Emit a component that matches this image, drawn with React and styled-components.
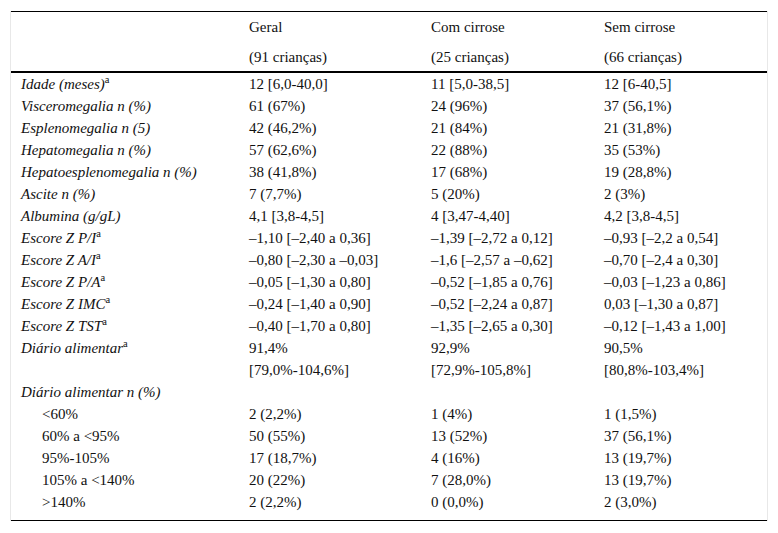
import React from 'react'
import styled, { createGlobalStyle } from 'styled-components'

const GlobalStyle = createGlobalStyle`
  html, body {
    margin: 0;
    padding: 0;
    background: #fff;
  }
`

const Frame = styled.div`
  box-sizing: border-box;
  margin: 11px 0 0 10px;
  width: 758px;
  border-left: 1px solid #e8e8e8;
  border-right: 1px solid #e8e8e8;
`

const Table = styled.table`
  width: 100%;
  border-collapse: collapse;
  table-layout: fixed;
  font-family: "Liberation Serif", "Times New Roman", serif;
  font-size: 15px;
  color: #111;
  border-top: 1px solid #000;
  border-bottom: 1px solid #000;
`

const HeadCell = styled.th`
  font-weight: normal;
  text-align: left;
  vertical-align: top;
  padding: 4px 0 3px 10px;
  border-bottom: 2px solid #000;
`

const HeadLine = styled.div`
  line-height: 22px;
  & + & {
    margin-top: 8px;
  }
`

const Body = styled.tbody`
  &::before {
    content: '';
    display: table-row;
    height: 1px;
  }
  &::after {
    content: '';
    display: table-row;
    height: 7px;
  }
`

const Row = styled.tr`
  height: 22px;
`

const Label = styled.td`
  padding: 0 0 0 ${({ $indent }) => ($indent ? 31 : 10)}px;
  font-style: italic;
  white-space: nowrap;
  line-height: 22px;
`

const PlainLabel = styled(Label)`
  font-style: normal;
`

const Value = styled.td`
  padding: 0 0 0 10px;
  white-space: nowrap;
  line-height: 22px;
`

const Sup = styled.sup`
  font-style: normal;
  font-size: 10.5px;
  line-height: 0;
  vertical-align: 6px;
`

const a = <Sup>a</Sup>

const rows = [
  { label: <>Idade (meses){a}</>, v: ['12 [6,0-40,0]', '11 [5,0-38,5]', '12 [6-40,5]'] },
  { label: 'Visceromegalia n (%)', v: ['61 (67%)', '24 (96%)', '37 (56,1%)'] },
  { label: 'Esplenomegalia n (5)', v: ['42 (46,2%)', '21 (84%)', '21 (31,8%)'] },
  { label: 'Hepatomegalia n (%)', v: ['57 (62,6%)', '22 (88%)', '35 (53%)'] },
  { label: 'Hepatoesplenomegalia n (%)', v: ['38 (41,8%)', '17 (68%)', '19 (28,8%)'] },
  { label: 'Ascite n (%)', v: ['7 (7,7%)', '5 (20%)', '2 (3%)'] },
  { label: 'Albumina (g/gL)', v: ['4,1 [3,8-4,5]', '4 [3,47-4,40]', '4,2 [3,8-4,5]'] },
  { label: <>Escore Z P/I{a}</>, v: ['–1,10 [–2,40 a 0,36]', '–1,39 [–2,72 a 0,12]', '–0,93 [–2,2 a 0,54]'] },
  { label: <>Escore Z A/I{a}</>, v: ['–0,80 [–2,30 a –0,03]', '–1,6 [–2,57 a –0,62]', '–0,70 [–2,4 a 0,30]'] },
  { label: <>Escore Z P/A{a}</>, v: ['–0,05 [–1,30 a 0,80]', '–0,52 [–1,85 a 0,76]', '–0,03 [–1,23 a 0,86]'] },
  { label: <>Escore Z IMC{a}</>, v: ['–0,24 [–1,40 a 0,90]', '–0,52 [–2,24 a 0,87]', '0,03 [–1,30 a 0,87]'] },
  { label: <>Escore Z TST{a}</>, v: ['–0,40 [–1,70 a 0,80]', '–1,35 [–2,65 a 0,30]', '–0,12 [–1,43 a 1,00]'] },
  { label: <>Diário alimentar{a}</>, v: ['91,4%', '92,9%', '90,5%'] },
  { label: '', v: ['[79,0%-104,6%]', '[72,9%-105,8%]', '[80,8%-103,4%]'] },
  { label: 'Diário alimentar n (%)', v: ['', '', ''] },
  { label: '<60%', indent: true, v: ['2 (2,2%)', '1 (4%)', '1 (1,5%)'] },
  { label: '60% a <95%', indent: true, v: ['50 (55%)', '13 (52%)', '37 (56,1%)'] },
  { label: '95%-105%', indent: true, v: ['17 (18,7%)', '4 (16%)', '13 (19,7%)'] },
  { label: '105% a <140%', indent: true, v: ['20 (22%)', '7 (28,0%)', '13 (19,7%)'] },
  { label: '>140%', indent: true, v: ['2 (2,2%)', '0 (0,0%)', '2 (3,0%)'] }
]

export default function App () {
  return (
    <>
      <GlobalStyle />
      <Frame>
        <Table>
          <colgroup>
            <col style={{ width: 228 }} />
            <col style={{ width: 182 }} />
            <col style={{ width: 173 }} />
            <col />
          </colgroup>
          <thead>
            <tr>
              <HeadCell />
              <HeadCell>
                <HeadLine>Geral</HeadLine>
                <HeadLine>(91 crianças)</HeadLine>
              </HeadCell>
              <HeadCell>
                <HeadLine>Com cirrose</HeadLine>
                <HeadLine>(25 crianças)</HeadLine>
              </HeadCell>
              <HeadCell>
                <HeadLine>Sem cirrose</HeadLine>
                <HeadLine>(66 crianças)</HeadLine>
              </HeadCell>
            </tr>
          </thead>
          <Body>
            {rows.map((r, i) => (
              <Row key={i}>
                {r.indent
                  ? <PlainLabel $indent>{r.label}</PlainLabel>
                  : <Label>{r.label}</Label>}
                {r.v.map((v, j) => <Value key={j}>{v}</Value>)}
              </Row>
            ))}
          </Body>
        </Table>
      </Frame>
    </>
  )
}
